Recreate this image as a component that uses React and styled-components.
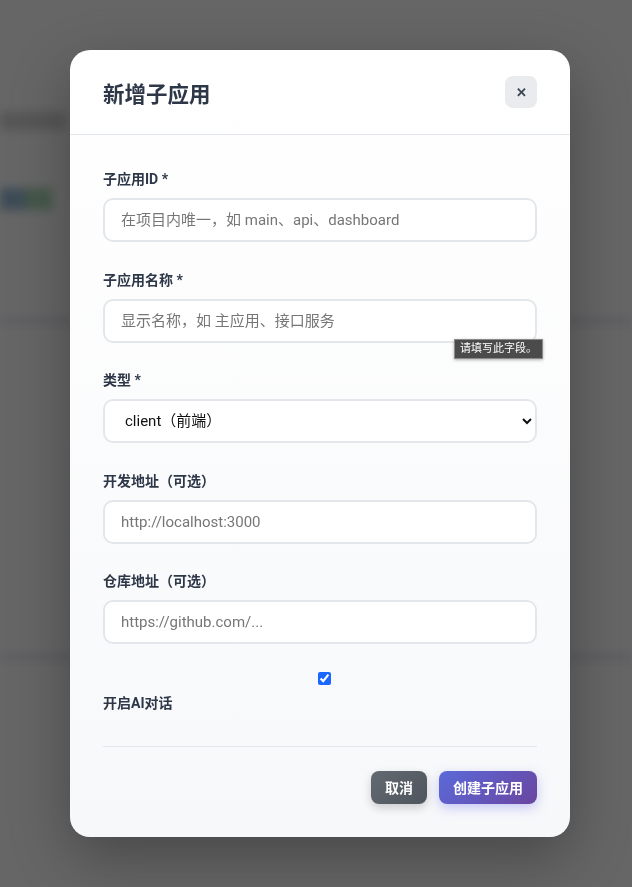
import React from 'react';
import styled, { createGlobalStyle } from 'styled-components';

const GlobalStyle = createGlobalStyle`
  * { box-sizing: border-box; }
  html, body { margin: 0; padding: 0; }
  body {
    font-family: "Roboto", "Noto Sans CJK SC", sans-serif;
    background: #666666;
    overflow: hidden;
  }
`;

const Page = styled.div`
  height: 100vh;
  background: #666666;
  filter: blur(5px);
  display: flex;
  flex-direction: column;
`;

const PageTitle = styled.div`
  margin-top: 112px;
  width: 66px;
  height: 18px;
  background: #565656;
`;

const PageButtons = styled.div`
  margin-top: 58px;
  display: flex;
`;

const PageChip = styled.div`
  width: 26px;
  height: 22px;
  background: ${p => p.$c};
`;

const PageRule = styled.div`
  margin-top: ${p => p.$top}px;
  height: 6px;
  background: #5c5c62;
`;

const Overlay = styled.div`
  position: fixed;
  inset: 0;
  display: flex;
  align-items: center;
  justify-content: center;
  padding-left: 8px;
`;

const Modal = styled.form`
  width: 500px;
  border-radius: 20px;
  background: linear-gradient(180deg, #ffffff 0%, #f7f8fa 100%);
  box-shadow: 0 20px 60px rgba(0, 0, 0, 0.3);
`;

const Header = styled.div`
  height: 85px;
  padding: 0 33px;
  display: flex;
  align-items: center;
  justify-content: space-between;
  border-bottom: 1px solid #e3e6ea;
`;

const Title = styled.h2`
  margin: 0;
  font-size: 21.5px;
  font-weight: 700;
  color: #2d3748;
`;

const CloseButton = styled.button`
  width: 32px;
  height: 32px;
  border: none;
  border-radius: 8px;
  background: #e9ebee;
  color: #3b4452;
  font-size: 13px;
  font-weight: 700;
  display: flex;
  align-items: center;
  justify-content: center;
  padding: 0;
  cursor: pointer;
`;

const Body = styled.div`
  padding: 34px 33px 33px;
`;

const Group = styled.div`
  position: relative;
  margin-bottom: 27.5px;
`;

const Label = styled.label`
  display: block;
  font-size: 14px;
  font-weight: 700;
  line-height: 20px;
  color: #2d3748;
  margin-bottom: 9px;
`;

const Input = styled.input`
  display: block;
  width: 100%;
  height: 44px;
  padding: 0 16px;
  border: 2px solid #e3e7ec;
  border-radius: 10px;
  background: #ffffff;
  font-family: inherit;
  font-size: 15px;
  color: #1a202c;
  outline: none;
  &::placeholder { color: #767676; }
`;

const Select = styled.select`
  display: block;
  width: 100%;
  height: 44px;
  padding: 0 12px 0 16px;
  border: 2px solid #e3e7ec;
  border-radius: 10px;
  background: #ffffff;
  font-family: inherit;
  font-size: 15px;
  color: #111111;
  outline: none;
`;

const Bubble = styled.div`
  position: absolute;
  right: -6px;
  top: 69px;
  padding: 2px 5px;
  background: #4b4b4b;
  border: 1px solid #8a8a8a;
  color: #ffffff;
  font-size: 11px;
  line-height: 14px;
  box-shadow: 0 1px 3px rgba(0, 0, 0, 0.3);
`;

const CheckRow = styled.div`
  display: flex;
  flex-direction: column;
  padding-bottom: 24px;
`;

const CheckBox = styled.input`
  align-self: center;
  margin: 0 0 8px 8px;
  width: 13px;
  height: 13px;
  accent-color: #1a66ff;
`;

const Footer = styled.div`
  display: flex;
  justify-content: flex-end;
  gap: 12px;
  padding-top: 24px;
  border-top: 1px solid #e3e6ea;
`;

const Button = styled.button`
  height: 33px;
  padding: 0 14px;
  border: none;
  border-radius: 8px;
  font-family: inherit;
  font-size: 14px;
  font-weight: 700;
  color: #ffffff;
  background: ${p => (p.$primary
    ? 'linear-gradient(135deg, #5b6ad9 0%, #6a45a0 100%)'
    : 'linear-gradient(135deg, #626970 0%, #4f555c 100%)')};
  box-shadow: ${p => (p.$primary
    ? '0 4px 12px rgba(102, 110, 234, 0.35)'
    : '0 4px 10px rgba(0, 0, 0, 0.18)')};
  cursor: pointer;
`;

export default function App() {
  return (
    <>
      <GlobalStyle />
      <Page>
        <PageTitle />
        <PageButtons>
          <PageChip $c="#3e4c57" />
          <PageChip $c="#45584a" />
        </PageButtons>
        <PageRule $top={108} />
        <PageRule $top={330} />
      </Page>
      <Overlay>
        <Modal onSubmit={e => e.preventDefault()}>
          <Header>
            <Title>新增子应用</Title>
            <CloseButton type="button">✕</CloseButton>
          </Header>
          <Body>
            <Group>
              <Label>子应用ID *</Label>
              <Input placeholder="在项目内唯一，如 main、api、dashboard" />
            </Group>
            <Group>
              <Label>子应用名称 *</Label>
              <Input placeholder="显示名称，如 主应用、接口服务" />
              <Bubble>请填写此字段。</Bubble>
            </Group>
            <Group>
              <Label>类型 *</Label>
              <Select defaultValue="client">
                <option value="client">client（前端）</option>
                <option value="api">api（后端）</option>
              </Select>
            </Group>
            <Group>
              <Label>开发地址（可选）</Label>
              <Input placeholder="http://localhost:3000" />
            </Group>
            <Group>
              <Label>仓库地址（可选）</Label>
              <Input placeholder="https://github.com/..." />
            </Group>
            <CheckRow>
              <CheckBox type="checkbox" defaultChecked />
              <Label>开启AI对话</Label>
            </CheckRow>
            <Footer>
              <Button type="button">取消</Button>
              <Button type="submit" $primary>创建子应用</Button>
            </Footer>
          </Body>
        </Modal>
      </Overlay>
    </>
  );
}
